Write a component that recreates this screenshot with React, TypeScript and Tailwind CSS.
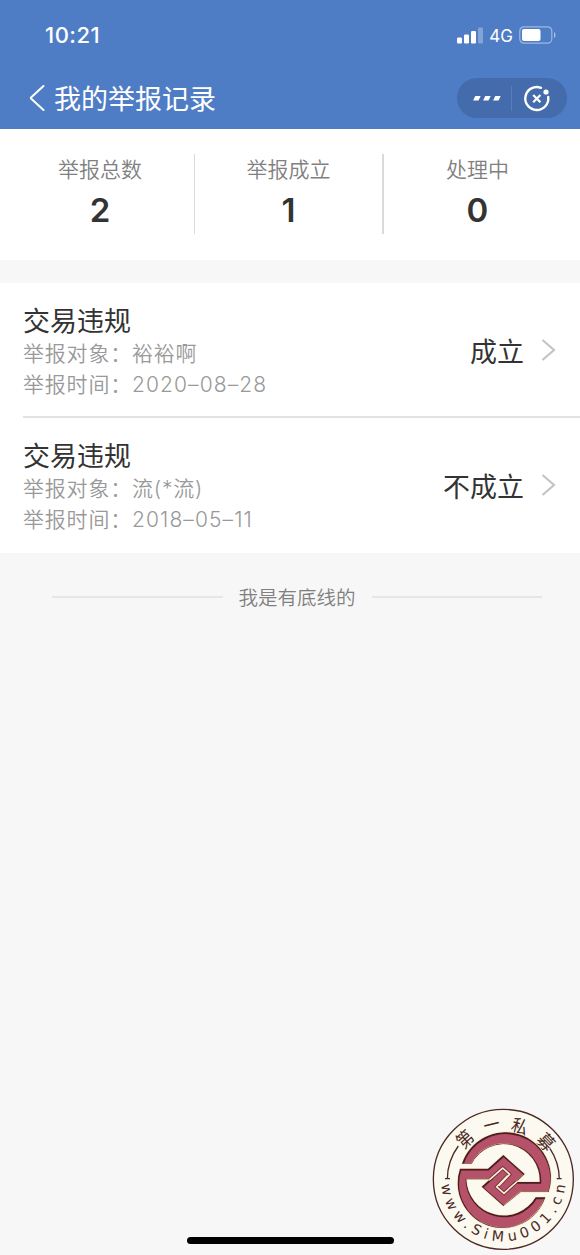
const FONT = "font-[Inter,'Noto_Sans_CJK_SC',sans-serif]"

const stats = [
  { label: "举报总数", value: 2 },
  { label: "举报成立", value: 1 },
  { label: "处理中", value: 0 },
]

const reports = [
  { title: "交易违规", target: "裕裕啊", date: "2020–08–28", status: "成立" },
  { title: "交易违规", target: "流(*流)", date: "2018–05–11", status: "不成立" },
]

const sealTop = [
  { char: "第", x: 120, y: 117, angle: -43 },
  { char: "一", x: 200, y: 74, angle: -13 },
  { char: "私", x: 284, y: 80, angle: 15 },
  { char: "募", x: 363, y: 126, angle: 46 },
]

function StatusBar() {
  return (
    <div className="flex h-[68px] items-center justify-between pr-[23px] pl-[45px] pt-0.5">
      <span className="text-[22px] font-medium tracking-[0.5px]">10:21</span>
      <div className="flex items-center">
        <svg className="mt-px" width="26" height="17" viewBox="0 0 26 17" fill="currentColor">
          <rect x="0" y="10.5" width="5" height="6" rx="1.2" />
          <rect x="7" y="7.5" width="5" height="9" rx="1.2" />
          <rect x="14" y="4" width="5" height="12.5" rx="1.2" />
          <rect x="21" y="0.5" width="5" height="16" rx="1.2" opacity="0.3" />
        </svg>
        <span className="ml-1.5 pt-0.5 text-[17px] leading-5">4G</span>
        <svg className="ml-1.5" width="38" height="18" viewBox="0 0 38 18">
          <rect x="0.8" y="0.8" width="32" height="16.4" rx="4.2" fill="none" stroke="currentColor" strokeWidth="1.2" opacity="0.45" />
          <rect x="3" y="3" width="18.5" height="12" rx="2" fill="currentColor" />
          <path d="M35 6v6c2-1 2-5 0-6" fill="currentColor" opacity="0.5" />
        </svg>
      </div>
    </div>
  )
}

function NavBar() {
  return (
    <div className="flex h-[60px] items-center pr-[13px] pl-[29px]">
      <svg width="17" height="26" viewBox="0 0 17 26" fill="none" stroke="currentColor" strokeWidth="2" strokeLinecap="round" strokeLinejoin="round">
        <path d="M14.5 1 2 12.5a.7.7 0 0 0 0 1L14.5 25" />
      </svg>
      <h1 className="ml-2 pt-0.5 text-[27px] leading-none">我的举报记录</h1>
      <div className="ml-auto flex h-10 w-[110px] items-center rounded-full bg-[#446cac]">
        <svg width="110" height="40" viewBox="0 0 110 40">
          <path d="M18.3 18h5.4l-2.2 4.6h-5.4zM28.3 18h5.4l-2.2 4.6h-5.4zM38.3 18h5.4l-2.2 4.6h-5.4z" fill="#fff" />
          <path d="M54.5 8v25" stroke="#587eba" />
          <path d="M84 9.8A11.5 11.5 0 1 0 91.2 19" fill="none" stroke="#fff" strokeWidth="2.4" strokeLinecap="round" />
          <circle cx="89" cy="14" r="2.6" fill="#fff" />
          <path d="m76.2 17 7.2 7.2m0-7.2-7.2 7.2" stroke="#fff" strokeWidth="2.2" />
        </svg>
      </div>
    </div>
  )
}

function Chevron() {
  return (
    <svg width="15" height="22" viewBox="0 0 15 22" fill="none" stroke="#c4c4c4" strokeWidth="2.2">
      <path d="m1.5 1 11.5 10L1.5 21" />
    </svg>
  )
}

const EMBLEM =
  "M111 191A135 135 0 0 1 371 276H287L235 318 170 260 195 238H124A112 112 0 0 0 332 292H361A135 135 0 0 1 105 206H189L235 165 299 222 274 246H344A108 108 0 0 0 140 191Z"

function Seal() {
  return (
    <svg className="absolute top-[1100px] left-[425px]" width="155" height="155" viewBox="0 0 465 465">
      <defs>
        <path id="seal-text" d="M48.7 254A187 187 0 0 0 421.8 230" />
        <clipPath id="seal-clip">
          <path d={EMBLEM} />
        </clipPath>
        <filter id="seal-blur">
          <feGaussianBlur stdDeviation="2" />
        </filter>
      </defs>
      <circle cx="235" cy="238" r="210" fill="#fcfaf0" stroke="#4c2a24" strokeWidth="4" />
      <path d="M60 236h15M67 238A168 168 0 0 1 100 138M395 236h15M403 238A168 168 0 0 0 375 146" fill="none" stroke="#4c2a24" strokeWidth="4" />
      <g fill="#4c2a24" fontFamily="'Noto Sans CJK SC', sans-serif" fontSize="54" textAnchor="middle">
        {sealTop.map((item) => (
          <text key={item.char} transform={`translate(${item.x} ${item.y}) rotate(${item.angle}) scale(0.9 1.05)`} y="20">
            {item.char}
          </text>
        ))}
      </g>
      <text fill="#4c2a24" fontFamily="'DejaVu Sans', sans-serif" fontSize="43">
        <textPath href="#seal-text" textLength="552">www.SiMu001.cn</textPath>
      </text>

      {/* Ring and knot */}
      <path d={EMBLEM} fill="#b55169" stroke="#f8e9b8" strokeWidth="4" />
      <g clipPath="url(#seal-clip)">
        <path d={EMBLEM} fill="none" stroke="#4a1c28" strokeWidth="7" filter="url(#seal-blur)" transform="translate(1 2)" />
        <path d="M195 238 233 204 254 223 222 257M274 246 237 280 215 261 248 227" fill="none" stroke="#6b2b3b" strokeWidth="10" />
        <path d="M191 241 233 204 254 223 222 257M278 243 237 280 215 261 248 227" fill="none" stroke="#fbf0cc" strokeWidth="5" />
      </g>
    </svg>
  )
}

export default function App() {
  return (
    <div className={`relative flex h-[1255px] w-[580px] flex-col overflow-hidden bg-[#f7f7f7] text-[#333] ${FONT}`}>
      <header className="h-[129px] shrink-0 bg-[#4f7dc5] text-white">
        <StatusBar />
        <NavBar />
      </header>

      {/* Totals */}
      <section className="flex h-[131px] shrink-0 bg-white pt-[25px] pl-1.5">
        {stats.map((stat) => (
          <div key={stat.label} className="flex h-20 w-[189px] flex-col items-center border-r-2 border-[#dadada] first:border-r last:border-r-0 last:pr-0.5">
            <span className="pt-px text-[21px] leading-[30px] font-[350] text-[#808080]">{stat.label}</span>
            <span className="mt-[7px] text-[33px] leading-[36px] font-semibold">{stat.value}</span>
          </div>
        ))}
      </section>

      {/* Report list */}
      <section className="mt-[23px] shrink-0 bg-white pl-[23px]">
        {reports.map((report) => (
          <div key={report.date} className="flex h-[135px] items-center border-b-2 border-[#e2e2e2] pr-6 last:border-transparent">
            <div className="pt-1">
              <h2 className="pt-0.5 text-[27px] leading-[32px]">{report.title}</h2>
              <p className="text-[21px] leading-[31px] font-[350] tracking-[0.8px] text-[#999]">举报对象：{report.target}</p>
              <p className="text-[21px] leading-[31px] font-[350] tracking-[0.8px] text-[#999]">
                举报时间：<span className="tracking-[1.1px]">{report.date}</span>
              </p>
            </div>
            <span className="ml-auto pt-[7px] text-[27px]">{report.status}</span>
            <span className="ml-[17px]">
              <Chevron />
            </span>
          </div>
        ))}
      </section>

      <div className="flex items-center gap-4 pt-[27px] pr-[38px] pl-[52px]">
        <div className="h-0.5 flex-1 bg-[#e6e6e6]" />
        <span className="pt-1 text-[19.5px] leading-[29px] font-[350] text-[#808080]">我是有底线的</span>
        <div className="h-0.5 flex-1 bg-[#e6e6e6]" />
      </div>

      <div className="mx-auto mt-auto mb-[11px] h-[7px] w-[207px] shrink-0 rounded-full bg-black" />
      <Seal />
    </div>
  )
}
